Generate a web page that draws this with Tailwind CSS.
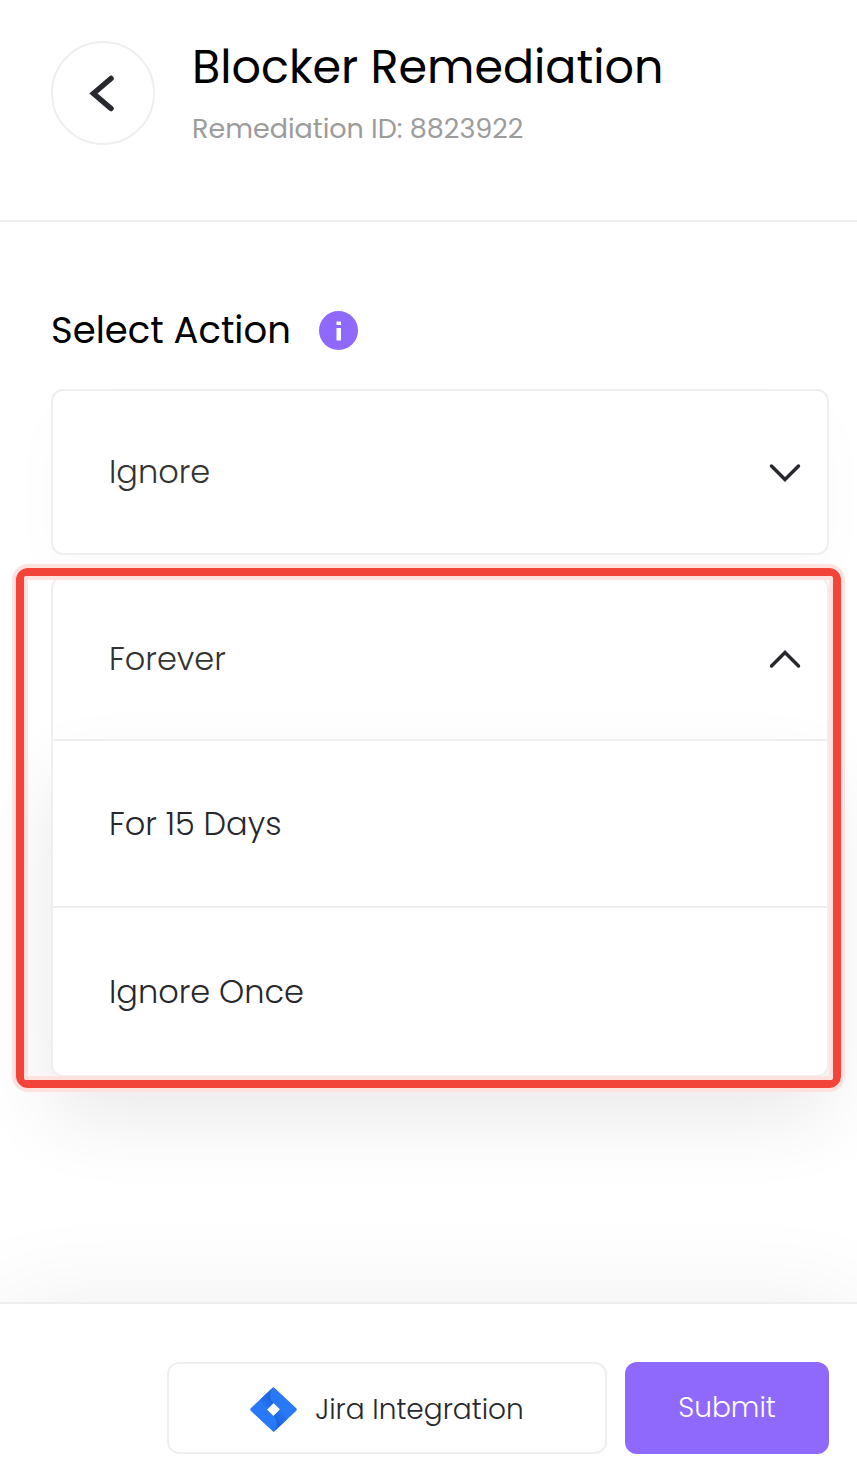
<!DOCTYPE html>
<html lang="en">
<head>
<meta charset="utf-8">
<meta name="viewport" content="width=device-width, initial-scale=1">
<title>Blocker Remediation</title>
<script src="https://cdn.jsdelivr.net/npm/@tailwindcss/browser@4"></script>
</head>
<body class="flex min-h-screen flex-col overflow-x-hidden bg-white font-['Poppins','Inter',sans-serif] font-light text-[#27282d]">
  <header class="flex items-start gap-[37px] border-b-2 border-[#eeeeee] px-[51px] pt-[41px] pb-[73px]">
    <button type="button" aria-label="Back" class="flex size-[104px] shrink-0 items-center justify-center rounded-full border-2 border-[#efefef]">
      <svg class="size-[40px]" viewBox="0 0 40 40" fill="none" stroke="currentColor" stroke-width="5.500" stroke-linecap="round"><path d="M28 5.500 10.500 20.500 28 35.500" stroke-linejoin="miter"/></svg>
    </button>
    <div>
      <h1 class="text-[46px] leading-[52px] font-normal text-black">Blocker Remediation</h1>
      <p class="mt-[18px] text-[27px] leading-[36px] font-normal text-[#9c9c9c]">Remediation ID: 8823922</p>
    </div>
  </header>

  <main class="flex-1 pr-[28px] pb-[80px] pl-[51px]">
    <div class="flex items-center gap-[28px] pt-[84px]">
      <label for="action" class="text-[37px] leading-[48px] font-normal text-black">Select Action</label>
      <button type="button" aria-label="About actions" class="size-[39px] shrink-0">
        <svg class="size-[39px]" viewBox="0 0 39 39"><circle cx="19.500" cy="19.500" r="19.500" fill="#8f68fc"/><path d="M17.500 10.500h4.500v3.500h-4.500zM17.500 17h4.500v12.500h-4.500z" fill="#fff"/></svg>
      </button>
    </div>

    <div class="relative mt-[35px] rounded-xl shadow-[0_24px_60px_rgba(0,0,0,0.02)]">
      <select id="action" class="h-[166px] w-full appearance-none rounded-xl border-2 border-[#efefef] bg-white pr-[80px] pl-[56px] text-[32px] text-[#333333]">
        <option>Ignore</option>
      </select>
      <svg class="pointer-events-none absolute top-[66px] right-[26px] size-[36px]" viewBox="0 0 36 36" fill="none" stroke="currentColor" stroke-width="3.500" stroke-linecap="round"><path d="M4.500 11 18 24.500 31.500 11"/></svg>
    </div>

    <div class="relative mt-[21px]">
      <button type="button" aria-haspopup="listbox" aria-expanded="true" aria-controls="duration" class="flex h-[163px] w-full items-center justify-between rounded-t-xl border-2 border-b-0 border-[#efefef] bg-white pr-[24px] pl-[56px] text-[32px] text-[#333333]">
        Forever
        <svg class="size-[36px] text-[#27282d]" viewBox="0 0 36 36" fill="none" stroke="currentColor" stroke-width="3.500" stroke-linecap="round"><path d="M4.500 25 18 11.500 31.500 25"/></svg>
      </button>
      <div id="duration" role="listbox" aria-label="Duration" class="rounded-b-xl border-2 border-[#efefef] bg-white text-[32px] shadow-[0_40px_80px_rgba(0,0,0,0.09)]">
        <button type="button" role="option" aria-selected="false" class="block h-[167px] w-full border-b-2 border-[#efefef] pl-[56px] text-left">For 15 Days</button>
        <button type="button" role="option" aria-selected="false" class="block h-[167px] w-full pl-[56px] text-left">Ignore Once</button>
      </div>
      <div class="pointer-events-none absolute -top-[12px] -right-[16px] -bottom-[15px] -left-[39px] rounded-[16px] border-4 border-[#ffe2e0]">
        <div class="size-full rounded-[12px] border-8 border-[#f24438]">
          <div class="size-full rounded-[2px] border-4 border-[#ffe2e0]"></div>
        </div>
      </div>
    </div>
  </main>

  <footer class="flex justify-end gap-[18px] border-t-2 border-[#eeeeee] bg-white pt-[58px] pr-[28px] pb-[30px] pl-[51px] shadow-[0_0_100px_rgba(0,0,0,0.07)]">
    <button type="button" class="flex h-[92px] w-[440px] items-center justify-center gap-[18px] rounded-xl border-2 border-[#efefef] bg-white pt-[3px] text-[28px]">
      <svg class="size-[47px]" viewBox="0 0 47 47">
        <defs>
          <linearGradient id="fold-top" gradientUnits="userSpaceOnUse" x1="23" y1="11" x2="12" y2="20"><stop offset="0.100" stop-color="#1c62d8"/><stop offset="1" stop-color="#2878f8"/></linearGradient>
          <linearGradient id="fold-bottom" gradientUnits="userSpaceOnUse" x1="24" y1="36" x2="35" y2="27"><stop offset="0.100" stop-color="#1c62d8"/><stop offset="1" stop-color="#2878f8"/></linearGradient>
        </defs>
        <path d="M23.500 1 46 22Q47.500 23.500 46 25L23.500 46 1 25Q-.5 23.500 1 22ZM23.500 17 17 23.500 23.500 30 30 23.500Z" fill="#2878f8" fill-rule="evenodd"/>
        <path d="M23.500 1C19 6 19 12 23.500 17L17 23.500 9.500 14Z" fill="url(#fold-top)"/>
        <path d="M23.500 46C28 41 28 35 23.500 30L30 23.500 37.500 33Z" fill="url(#fold-bottom)"/>
      </svg>
      Jira Integration
    </button>
    <button type="submit" class="h-[92px] w-[204px] rounded-xl bg-[#8f68fc] text-[28px] text-white">Submit</button>
  </footer>
</body>
</html>
